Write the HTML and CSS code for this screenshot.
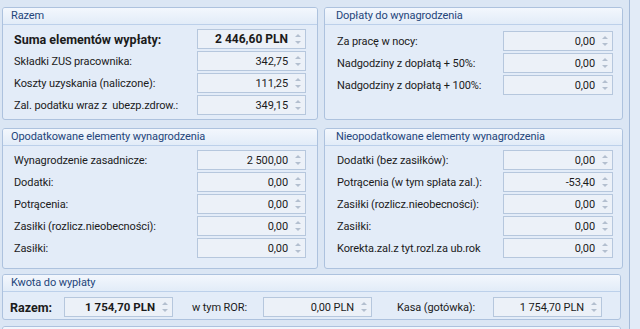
FILE: index.html
```html
<!DOCTYPE html>
<html lang="pl">
<head>
  <meta charset="UTF-8">
  <title>Wypłata</title>
  <link rel="stylesheet" href="styles.css">
</head>
<body>
  <div class="screen">
    <div class="main">
      <div class="cols">
        <section class="panel">
          <div class="panel-title">Razem</div>
          <div class="panel-body">
            <div class="field field-strong">
              <span class="label">Suma elementów wypłaty:</span>
              <div class="box"><span class="value">2 446,60 PLN</span><span class="spin"></span></div>
            </div>
            <div class="field">
              <span class="label">Składki ZUS pracownika:</span>
              <div class="box"><span class="value">342,75</span><span class="spin"></span></div>
            </div>
            <div class="field">
              <span class="label">Koszty uzyskania (naliczone):</span>
              <div class="box"><span class="value">111,25</span><span class="spin"></span></div>
            </div>
            <div class="field">
              <span class="label">Zal. podatku wraz z&nbsp; ubezp.zdrow.:</span>
              <div class="box"><span class="value">349,15</span><span class="spin"></span></div>
            </div>
          </div>
        </section>
        <section class="panel panel-right">
          <div class="panel-title">Dopłaty do wynagrodzenia</div>
          <div class="panel-body panel-body-low">
            <div class="field">
              <span class="label">Za pracę w nocy:</span>
              <div class="box"><span class="value">0,00</span><span class="spin"></span></div>
            </div>
            <div class="field">
              <span class="label">Nadgodziny z dopłatą + 50%:</span>
              <div class="box"><span class="value">0,00</span><span class="spin"></span></div>
            </div>
            <div class="field">
              <span class="label">Nadgodziny z dopłatą + 100%:</span>
              <div class="box"><span class="value">0,00</span><span class="spin"></span></div>
            </div>
          </div>
        </section>
      </div>

      <div class="cols cols-mid">
        <section class="panel">
          <div class="panel-title">Opodatkowane elementy wynagrodzenia</div>
          <div class="panel-body panel-body-tall">
            <div class="field">
              <span class="label">Wynagrodzenie zasadnicze:</span>
              <div class="box"><span class="value">2 500,00</span><span class="spin"></span></div>
            </div>
            <div class="field">
              <span class="label">Dodatki:</span>
              <div class="box"><span class="value">0,00</span><span class="spin"></span></div>
            </div>
            <div class="field">
              <span class="label">Potrącenia:</span>
              <div class="box"><span class="value">0,00</span><span class="spin"></span></div>
            </div>
            <div class="field">
              <span class="label">Zasiłki (rozlicz.nieobecności):</span>
              <div class="box"><span class="value">0,00</span><span class="spin"></span></div>
            </div>
            <div class="field">
              <span class="label">Zasiłki:</span>
              <div class="box"><span class="value">0,00</span><span class="spin"></span></div>
            </div>
          </div>
        </section>
        <section class="panel panel-right">
          <div class="panel-title">Nieopodatkowane elementy wynagrodzenia</div>
          <div class="panel-body panel-body-tall">
            <div class="field">
              <span class="label">Dodatki (bez zasiłków):</span>
              <div class="box"><span class="value">0,00</span><span class="spin"></span></div>
            </div>
            <div class="field">
              <span class="label">Potrącenia (w tym spłata zal.):</span>
              <div class="box"><span class="value">-53,40</span><span class="spin"></span></div>
            </div>
            <div class="field">
              <span class="label">Zasiłki (rozlicz.nieobecności):</span>
              <div class="box"><span class="value">0,00</span><span class="spin"></span></div>
            </div>
            <div class="field">
              <span class="label">Zasiłki:</span>
              <div class="box"><span class="value">0,00</span><span class="spin"></span></div>
            </div>
            <div class="field">
              <span class="label">Korekta.zal.z tyt.rozl.za ub.rok</span>
              <div class="box"><span class="value">0,00</span><span class="spin"></span></div>
            </div>
          </div>
        </section>
      </div>

      <section class="panel panel-total">
        <div class="panel-title">Kwota do wypłaty</div>
        <div class="panel-body total-body">
          <span class="total-label total-razem">Razem:</span>
          <div class="box box-strong"><span class="value">1 754,70 PLN</span><span class="spin"></span></div>
          <span class="total-label total-ror">w tym ROR:</span>
          <div class="box"><span class="value">0,00 PLN</span><span class="spin"></span></div>
          <span class="total-label total-kasa">Kasa (gotówka):</span>
          <div class="box"><span class="value">1 754,70 PLN</span><span class="spin"></span></div>
        </div>
      </section>

      <section class="panel panel-next">
        <div class="panel-title"></div>
      </section>
    </div>
    <div class="side"></div>
  </div>
</body>
</html>
```

FILE: styles.css
```css
body {
  margin: 0;
  font-family: Roboto, "Liberation Sans", sans-serif;
  font-size: 11px;
  letter-spacing: -0.1px;
  color: #1b1b1b;
  background-color: #dbe6f4;
  overflow: hidden;
}
.screen {
  display: flex;
  height: 329px;
  overflow: hidden;
}
.main {
  width: 629px;
  box-sizing: border-box;
  padding: 7px 0 0 2px;
  overflow: hidden;
}
.side {
  flex: 1;
  border-left: 1px solid #a5bbd9;
  background-color: #e2ebf7;
}
.cols {
  display: grid;
  grid-template-columns: 316px 299px;
  gap: 6px;
}
.cols-mid {
  margin-top: 8px;
}
.panel {
  border: 1px solid #adc2de;
  border-radius: 3px;
  background-color: #e3ecf8;
  overflow: hidden;
}
.panel-title {
  height: 16px;
  line-height: 16px;
  padding-left: 8px;
  font-size: 11px;
  color: #24457a;
  border-bottom: 1px solid #bcd0ea;
  background: linear-gradient(#f3f7fd, #e2ecf8);
}
.panel-right .panel-title {
  padding-left: 11px;
}
.panel-body {
  padding: 4px 11px 2px 11px;
}
.panel-right .panel-body {
  padding: 4px 9px 2px 12px;
}
.panel-right .panel-body-low {
  padding-top: 6px;
}
.panel-body-tall {
  padding-bottom: 8px;
}
.field {
  display: flex;
  align-items: center;
  height: 20px;
  margin-bottom: 2px;
}
.field .label {
  flex: 1;
  white-space: nowrap;
}
.field-strong {
  font-weight: bold;
  font-size: 12.5px;
  letter-spacing: 0;
}
.field-strong .value {
  font-size: 12px;
}
.box {
  display: flex;
  align-items: center;
  width: 109px;
  height: 20px;
  box-sizing: border-box;
  border: 1px solid #b6c7dd;
  background-color: #ecf1f8;
}
.panel-right .box {
  width: 110px;
}
.box .value {
  flex: 1;
  text-align: right;
  padding-right: 7px;
  white-space: nowrap;
}
.box-strong .value {
  font-weight: bold;
  font-size: 11.5px;
  letter-spacing: 0;
}
.spin {
  width: 6px;
  margin-right: 4px;
  display: flex;
  flex-direction: column;
  gap: 4px;
}
.spin::before,
.spin::after {
  content: "";
  width: 0;
  height: 0;
  border-left: 3px solid transparent;
  border-right: 3px solid transparent;
}
.spin::before {
  border-bottom: 3px solid #b3bfcf;
}
.spin::after {
  border-top: 3px solid #b3bfcf;
}
.panel-total {
  margin-top: 5px;
  width: 619px;
  box-sizing: border-box;
}
.total-body {
  display: flex;
  align-items: center;
  padding: 5px 0 2px 7px;
}
.total-label {
  white-space: nowrap;
}
.total-razem {
  width: 54px;
  font-weight: bold;
  font-size: 12.5px;
  letter-spacing: 0;
}
.total-ror {
  width: 71px;
  margin-left: 19px;
}
.total-kasa {
  width: 96px;
  margin-left: 25px;
}
.panel-next {
  margin-top: 6px;
  width: 619px;
  box-sizing: border-box;
  height: 20px;
}
```
